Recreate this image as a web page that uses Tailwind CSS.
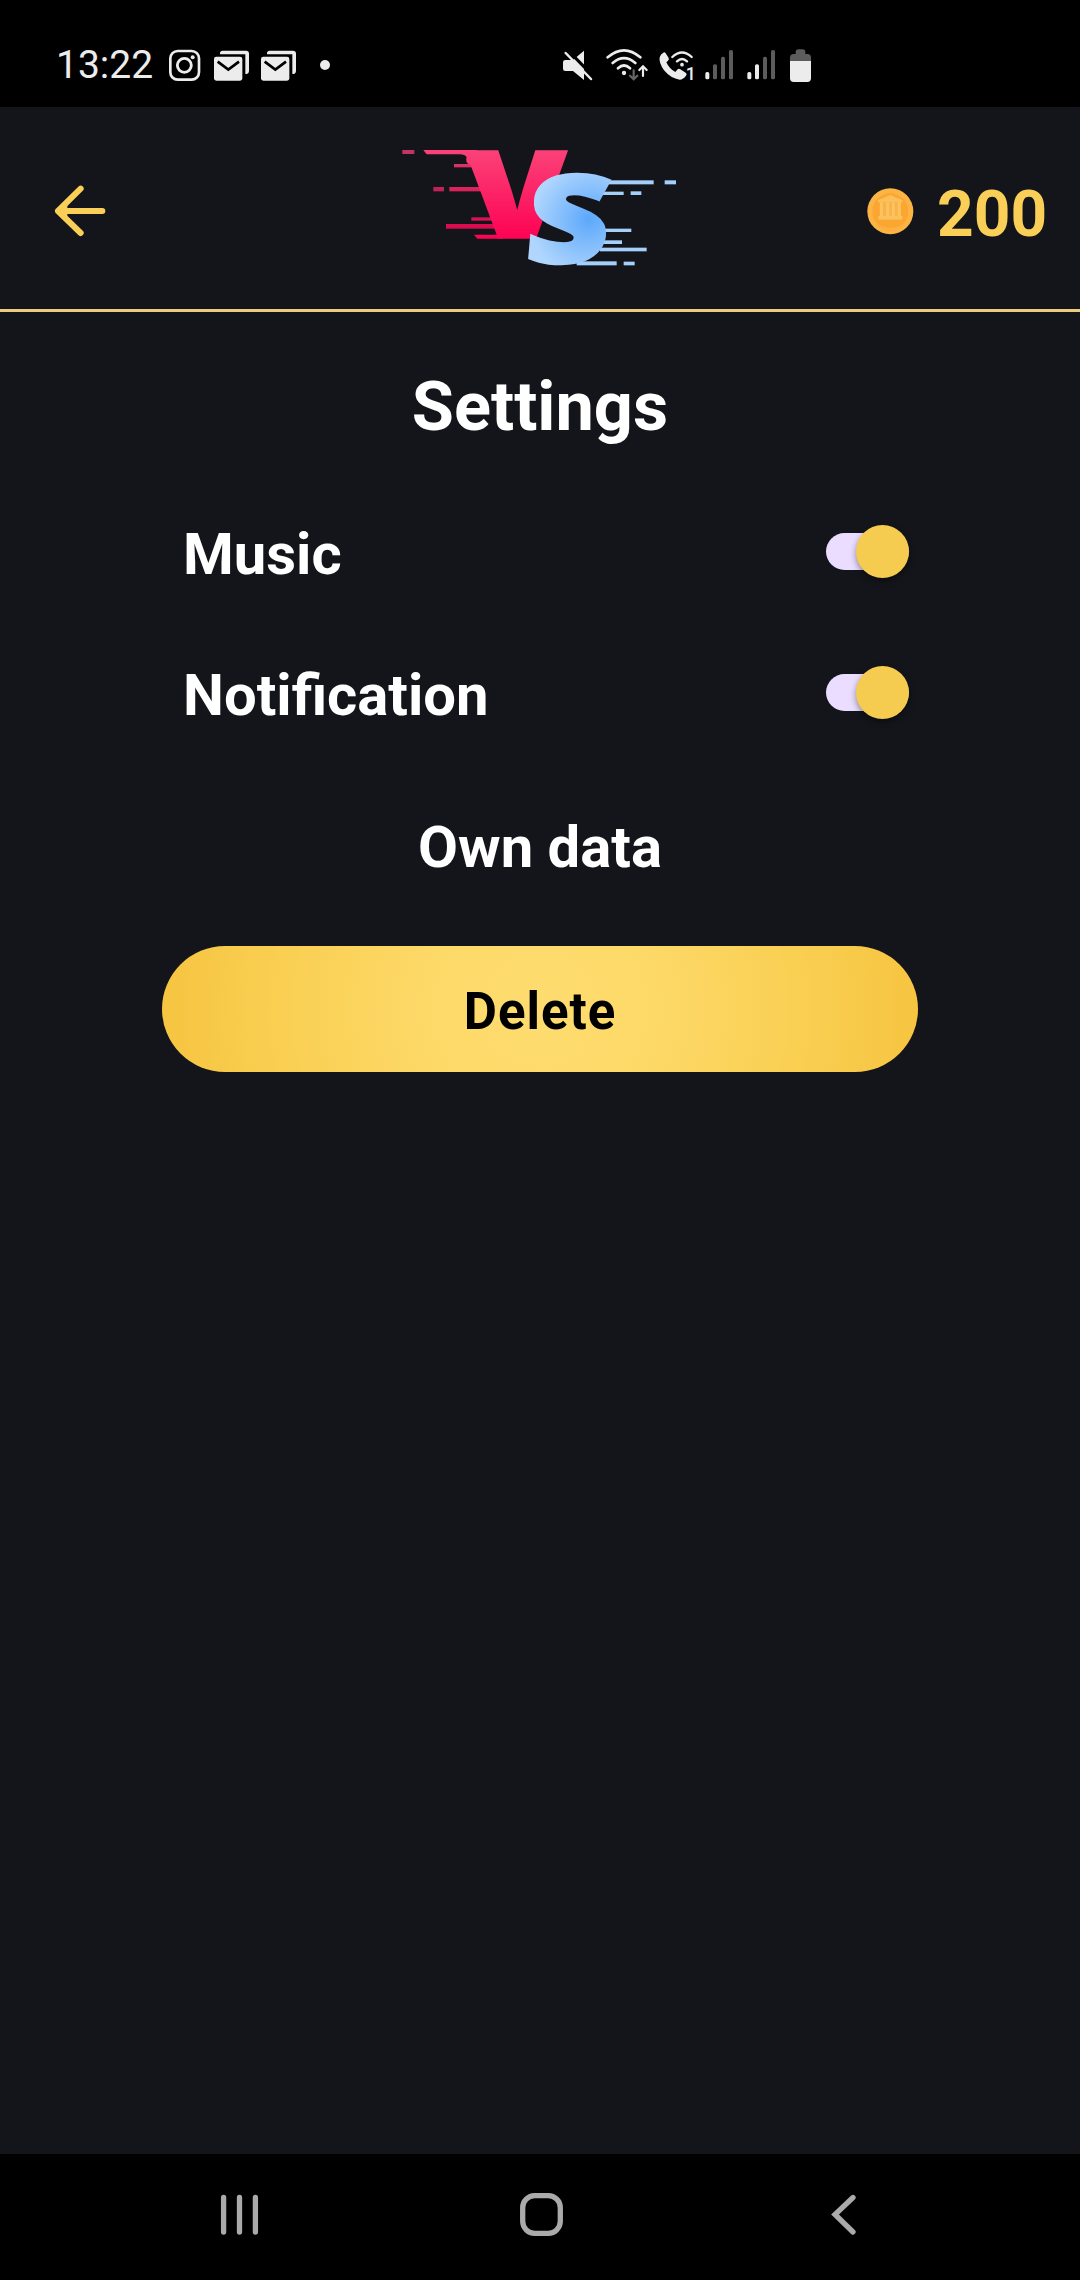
<!DOCTYPE html>
<html lang="en">
<head>
<meta charset="utf-8">
<title>Settings</title>
<script src="https://cdn.jsdelivr.net/npm/@tailwindcss/browser@4"></script>
</head>
<body class="bg-[#14151a]">
<div class="flex h-[2280px] w-[1080px] flex-col overflow-hidden bg-[#14151a] font-['Roboto',sans-serif] text-white">

  <!-- Status bar -->
  <div class="flex h-[107px] shrink-0 items-start bg-black pt-[47px] pl-[56px] text-[#ececec]">
    <span class="w-[112px] text-[39px] leading-[36px]">13:22</span>
    <svg class="h-[36px] w-[33px]" viewBox="384 51 99 108" fill="none" stroke="currentColor"><rect x="391" y="63" width="86" height="86" rx="22" stroke-width="8"/><circle cx="433" cy="106" r="21" stroke-width="8.500"/><circle cx="458" cy="82" r="6" fill="currentColor" stroke="none"/></svg>
    <svg class="ml-[12px] h-[36px] w-[37px]" viewBox="519 51 111 108"><path d="M540 70Q540 62 548 62H618Q627 62 627 71V122Q627 132 616 132V73H540Z" fill="currentColor"/><rect x="522" y="80" width="85" height="72" rx="7" fill="currentColor"/><path d="M533 95L565 119L597 95" fill="none" stroke="#000" stroke-width="8"/></svg>
    <svg class="ml-[10px] h-[36px] w-[37px]" viewBox="519 51 111 108"><path d="M540 70Q540 62 548 62H618Q627 62 627 71V122Q627 132 616 132V73H540Z" fill="currentColor"/><rect x="522" y="80" width="85" height="72" rx="7" fill="currentColor"/><path d="M533 95L565 119L597 95" fill="none" stroke="#000" stroke-width="8"/></svg>
    <span class="mt-[13px] ml-[23px] size-[10px] rounded-full bg-[#ececec]"></span>

    <svg class="ml-[232px] h-[36px] w-[32px]" viewBox="66 51 96 108"><path d="M132 62V150L99 123H76Q69 123 69 116V97Q69 90 76 90H99Z" fill="currentColor"/><path d="M82 59L163 142" stroke="#000" stroke-width="9"/><path d="M88 78L99 89L106 84L96 70Z" fill="#000"/><path d="M77 69L153 147" stroke="currentColor" stroke-width="7.500" stroke-linecap="round"/></svg>
    <svg class="ml-[11px] h-[36px] w-[44px]" viewBox="195 51 132 108" fill="none" stroke="currentColor" stroke-width="8" stroke-linecap="round"><path d="M203 82Q252 40 301 82M218 99Q252 70 286 99M234 115Q252 98 270 115"/><circle cx="252" cy="129" r="6.500" fill="currentColor" stroke="none"/><path d="M281 121V147M270 137L281 148L292 137" stroke="#666" stroke-width="6.500"/><path d="M309 138V110M298 120L309 109L320 120" stroke-width="6.500"/></svg>
    <svg class="ml-[9px] h-[36px] w-[37px]" viewBox="354 51 111 108"><path d="M370 68Q374 65 377 70L386 84Q388 89 384 92L379 97Q388 117 406 126L413 118Q416 115 421 118L438 129Q442 132 438 137Q430 148 419 149Q393 146 372 121Q356 98 359 82Q362 72 370 68Z" fill="currentColor"/><path d="M397 81Q426 54 455 81M411 94Q426 80 441 94" fill="none" stroke="currentColor" stroke-width="7" stroke-linecap="round"/><circle cx="426" cy="104" r="5.500" fill="currentColor"/><text x="437" y="149" font-family="Roboto" font-size="53" font-weight="500" fill="currentColor" stroke="#000" stroke-width="5" paint-order="stroke">1</text></svg>
    <svg class="ml-[10px] h-[36px] w-[29px]" viewBox="495 51 87 108" fill="#5c5c5c"><rect x="496" y="126" width="12" height="22" rx="5" fill="#ececec"/><rect x="519" y="103" width="12" height="45" rx="5"/><rect x="543" y="80" width="12" height="68" rx="5"/><rect x="567" y="60" width="12" height="88" rx="5"/></svg>
    <svg class="ml-[13px] h-[36px] w-[29px]" viewBox="495 51 87 108" fill="#5c5c5c"><rect x="496" y="126" width="12" height="22" rx="5" fill="#ececec"/><rect x="519" y="103" width="12" height="45" rx="5" fill="#ececec"/><rect x="543" y="80" width="12" height="68" rx="5"/><rect x="567" y="60" width="12" height="88" rx="5"/></svg>
    <svg class="ml-[14px] h-[36px] w-[21px]" viewBox="750 51 63 108"><path d="M750 94V83Q750 72 761 72H767V66Q767 58 775 58H788Q796 58 796 66V72H802Q813 72 813 83V94Z" fill="#5c5c5c"/><path d="M750 93H813V145Q813 156 802 156H761Q750 156 750 145Z" fill="currentColor"/></svg>
  </div>

  <!-- App header -->
  <header class="flex h-[205px] shrink-0 items-start border-b-[3px] border-[#ebcb7d]">
    <svg class="mt-[73px] ml-[50px] size-[60px]" viewBox="60 60 180 180" fill="none" stroke="#f9cf58" stroke-width="18" stroke-linecap="round" stroke-linejoin="round"><path d="M152 86L84 153L152 219M84 153H217"/><path d="M84 153L112 135V171Z" fill="#f9cf58" stroke="none"/></svg>
    <svg class="mt-[28px] ml-[280px] h-[145px] w-[300px] overflow-visible" viewBox="0 0 900 435" aria-label="VS">
      <defs>
        <linearGradient id="pink" gradientUnits="userSpaceOnUse" x1="0" y1="45" x2="0" y2="310"><stop offset="0" stop-color="#fb4278"/><stop offset="1" stop-color="#fd0254"/></linearGradient>
        <radialGradient id="blue" gradientUnits="userSpaceOnUse" cx="185" cy="-130" r="175"><stop offset="0" stop-color="#5ca8fb"/><stop offset="1" stop-color="#b0d6fd"/></radialGradient>
      </defs>
      <g fill="url(#pink)">
        <rect x="37" y="45" width="36" height="12" opacity=".75"/>
        <path d="M100 45H260V90H240Q224 82 230 66Q224 58 210 58H110Z"/>
        <rect x="192" y="87" width="60" height="10" opacity=".85"/>
        <rect x="130" y="156" width="32" height="13" opacity=".75"/>
        <rect x="178" y="156" width="95" height="13" opacity=".85"/>
        <rect x="244" y="247" width="65" height="10" opacity=".85"/>
        <rect x="168" y="267" width="155" height="14" opacity=".85"/>
        <path d="M252 299H340V311H262Z"/>
      </g>
      <text x="224" y="306" font-family="Inter" font-weight="900" font-size="350" textLength="311" lengthAdjust="spacingAndGlyphs" fill="url(#pink)" stroke="url(#pink)" stroke-width="10">V</text>
      <g fill="#a5cffb">
        <rect x="600" y="136" width="191" height="12"/><rect x="824" y="136" width="34" height="12"/>
        <rect x="610" y="170" width="91" height="10"/><rect x="722" y="169" width="32" height="11"/>
        <rect x="640" y="281" width="84" height="10"/><rect x="640" y="316" width="56" height="11"/>
        <rect x="630" y="338" width="140" height="11"/><rect x="560" y="379" width="120" height="12"/><rect x="701" y="380" width="33" height="11"/>
      </g>
      <text transform="translate(402 382) skewX(-5)" font-family="Open Sans" font-weight="800" font-size="362" textLength="246" lengthAdjust="spacingAndGlyphs" fill="url(#blue)" stroke="url(#blue)" stroke-width="12">S</text>
    </svg>
    <svg class="mt-[78px] ml-[175px] size-[50px]" viewBox="75 75 150 150"><circle cx="151" cy="154" r="69" fill="#fcb545"/><circle cx="151" cy="154" r="54" fill="#fba630"/><path d="M102 183A55 55 0 0 0 200 183Q151 225 102 183Z" fill="#fbb040"/><path d="M114 121L151 105L188 121V127H114Z" fill="#fcc05a"/><path d="M121 127H181V168H121Z" fill="#fbb347"/><path d="M124 127V169M143 127V169M160 127V169M178 127V169" stroke="#fcc460" stroke-width="9"/><path d="M115 168H187V179H115Z" fill="#fcc05a"/></svg>
    <span class="mt-[70px] ml-[22px] text-[64px] leading-[76px] font-bold text-[#f9cf58]">200</span>
  </header>

  <!-- Settings -->
  <main class="flex flex-1 flex-col items-center">
    <h1 class="mt-[55px] text-[68.500px] leading-[80px] font-bold">Settings</h1>
    <div class="mt-[34px] flex w-[756px] flex-col pr-[9px] pl-[21px]">
      <div class="flex h-[141px] items-center justify-between">
        <span class="mt-[4px] text-[58px] leading-[68px] font-bold">Music</span>
        <span class="flex h-[37px] w-[83px] items-center justify-end rounded-full bg-[#eaddff]"><span class="size-[53px] shrink-0 rounded-full bg-[#f5cb50] shadow-[0_3px_6px_rgba(0,0,0,0.4)]"></span></span>
      </div>
      <div class="flex h-[141px] items-center justify-between">
        <span class="mt-[4px] text-[58px] leading-[68px] font-bold">Notification</span>
        <span class="flex h-[37px] w-[83px] items-center justify-end rounded-full bg-[#eaddff]"><span class="size-[53px] shrink-0 rounded-full bg-[#f5cb50] shadow-[0_3px_6px_rgba(0,0,0,0.4)]"></span></span>
      </div>
    </div>
    <h2 class="mt-[50px] text-[58px] leading-[68px] font-bold">Own data</h2>
    <button class="mt-[65px] flex h-[126px] w-[756px] items-center justify-center rounded-full bg-[radial-gradient(circle_at_center,#ffdc70_0%,#fdd968_30%,#f9ce50_72%,#f6c440_100%)] pt-[5px] text-[51px] leading-[60px] font-bold tracking-[1px] text-black">Delete</button>
  </main>

  <!-- Navigation bar -->
  <nav class="flex h-[126px] shrink-0 items-start bg-black pt-[39px] text-[#aaaaaa]">
    <svg class="ml-[220px] h-[44px] w-[40px]" viewBox="0 0 40 44" stroke="currentColor" stroke-width="5.300" stroke-linecap="round"><path d="M3.600 4.500V39M19.500 4.500V39M35.400 4.500V39"/></svg>
    <svg class="ml-[260px] h-[44px] w-[43px]" viewBox="0 0 43 44" fill="none" stroke="currentColor" stroke-width="5.300"><rect x="2.700" y="2.700" width="37.600" height="37.600" rx="12"/></svg>
    <svg class="ml-[267px] h-[44px] w-[28px]" viewBox="0 0 28 44" fill="none" stroke="currentColor" stroke-width="5.300" stroke-linecap="round"><path d="M23 4.500L5 21.500L23 39"/></svg>
  </nav>
</div>
</body>
</html>
